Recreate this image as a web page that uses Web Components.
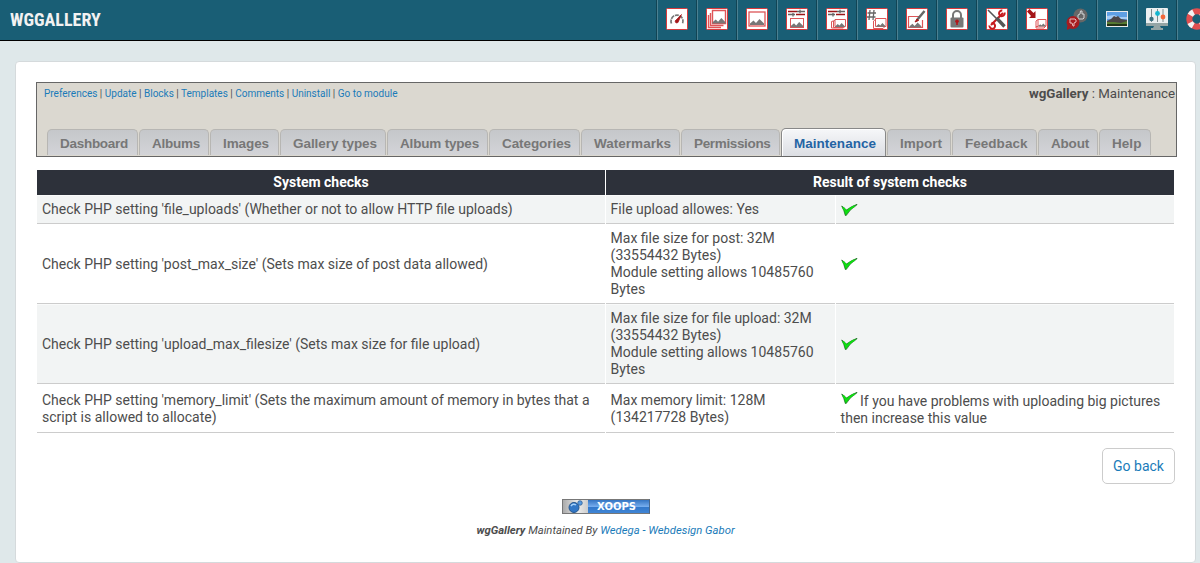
<!DOCTYPE html>
<html lang="en">
<head>
<meta charset="utf-8">
<title>wgGallery : Maintenance</title>
<style>
html,body{margin:0;height:563px;overflow:hidden;background:#dfe8ea}
body{font-family:Roboto,"Liberation Sans",sans-serif;font-size:14px;line-height:17px;color:#4d4d4d}
</style>
</head>
<body>
<wg-page></wg-page>
<script>
const define = (name, html, after) => {
  const t = document.createElement('template');
  t.innerHTML = html;
  customElements.define(name, class extends HTMLElement {
    connectedCallback() {
      if (this.shadowRoot) return;
      this.attachShadow({mode: 'open'}).append(t.content.cloneNode(true));
      if (after) after(this, this.shadowRoot);
    }
  });
};

const tile = s => `<rect x=".5" y=".5" width="21" height="21" rx="1" fill="#fff" stroke="#d93a3c"/>${s}`;
const hills = (x, y, k) => `<path transform="translate(${x} ${y}) scale(${k})" d="M0 6V4.500L3.500 1.500 6 4 9.500 0 14 4.500V6Z" fill="#777"/>`;
const sliders = '<path d="M2 3.500H11M10 6.500H19" stroke="#9c1517" stroke-width="1.500"/><path d="M11 3.500H19M2 6.500H9M7 5V8.500M14 1.800V5.200" stroke="#666" stroke-width="1.300"/>';
const stack = '<path d="M9 11.500H19.500V18.500H9ZM9 12.500 5.500 13.500V20H17L19 18.500M7.500 13V19.500H17" fill="none" stroke="#dc5759"/>';
const icons = {
  gauge: tile('<path d="M5.500 15.500A6 6 0 1 1 16.500 15.500" fill="none" stroke="#777" stroke-width="1.700" stroke-dasharray="4 .8"/><path d="M9 13 15.500 6.500 12 14.500 10 15Z" fill="#a51618" stroke="#a51618" stroke-width=".7"/>'),
  albums: tile('<path d="M6.500 2.500H19.500V15.500H6.500ZM4.500 5V17.500H17.500M2.500 7V19.500H15" fill="none" stroke="#df5557" stroke-width="1.400"/>' + hills(6.5, 10, .93)),
  image: tile('<rect x="3" y="4" width="16" height="14" fill="#fff" stroke="#dc5557" stroke-width="1.300"/>' + hills(4, 11, 1)),
  gtypes: tile(sliders + '<rect x="4.500" y="10.500" width="13" height="9" fill="none" stroke="#dc5557"/>' + hills(5, 14, .86)),
  atypes: tile(sliders + stack + hills(9.5, 15, .65)),
  cats: tile('<path d="M4 2 3 12M8 2 7 12M1.500 5H10M1 9H9.500" stroke="#666" stroke-width="1.300"/><path d="M9.500 10.500H20V18.500H9.500ZM9.500 11.500 7.500 13V20.500H17L19 18.500" fill="none" stroke="#df5557"/>' + hills(10.5, 15, .62)),
  water: tile('<path d="M14.500 8.500H2.500V19.500H16.500V12" fill="none" stroke="#dc5557" stroke-width="1.200"/>' + hills(3.5, 14.5, .85) + '<path d="M11 12 18.500 3" stroke="#666" stroke-width="2.500"/><path d="M9 14 11 11 12.500 12.500Z" fill="#a51618" stroke="#a51618"/>'),
  lock: tile('<path d="M7 10V7A4 4 0 0 1 15 7V10" fill="none" stroke="#777" stroke-width="2"/><rect x="4.500" y="9.500" width="13" height="10" rx="1" fill="#777"/><circle cx="11" cy="13.200" r="1.800" fill="#b41518"/><path d="M11 13V17" stroke="#b41518" stroke-width="1.600"/>'),
  tools: tile('<path d="M5 17 17 5" stroke="#c61a1e" stroke-width="2.200"/><path d="M18.500 4.500A2.800 2.800 0 1 1 16.300 2.600M3.500 17.500A2.800 2.800 0 1 0 5.600 15.200" fill="none" stroke="#c61a1e" stroke-width="2"/><path d="M2 2 11 11" stroke="#555" stroke-width="1.600"/><path d="M10.500 10 18.500 18.500" stroke="#555" stroke-width="3.400"/>'),
  imp: tile('<path d="M1 3.500 3.500 1 7.500 5 9.500 3V10H3L5 8Z" fill="#a51618"/><path d="M12 11.500H20V18H12ZM12 11.500 10 13V20H18L20 18M10 18.500H12" fill="none" stroke="#df5557"/>' + hills(12.5, 15.5, .5)),
  feedback: '<circle cx="14.500" cy="7.500" r="7" fill="#666"/><path d="M12 11V7L14 6 14.500 3H16V6H18V10L17 11Z" fill="none" stroke="#d4d7d8"/><circle cx="7" cy="14.500" r="6.500" fill="#a61c20"/><path d="M4 11H9L10 12V14L8 15V18H7L6 15H4Z" fill="none" stroke="#e6bcbd"/><path d="M1 18V22L5 20" fill="#a61c20"/>',
  photo: '<rect x=".5" y="3.500" width="21" height="15" fill="#5e9fe3" stroke="#eaeaea"/><path d="M1 8 8 7 13 9H21V11H1Z" fill="#a4ccf4"/><path d="M1 13 5 11 8 8 10 9 12 8 15 11 21 12V18H1Z" fill="#4b4647"/><path d="M1 14 8 14 15 15 21 13V18H1Z" fill="#577b31"/><path d="M1 17H21" stroke="#253318" stroke-width="2"/>',
  monitor: '<rect y="0" width="22" height="18" rx="1" fill="#ecf0f1"/><path d="M0 15H22V18H0Z" fill="#95a5a5"/><path d="M8 18H14L15 20H17V22H5V20H7Z" fill="#95a5a5"/><path d="M5.500 1V14M11.500 1V14M17 1V14" stroke="#7f8c8d"/><circle cx="5.500" cy="11" r="2.200" fill="#3c7080"/><circle cx="11.500" cy="5.500" r="2.400" fill="#13b5cf"/><circle cx="17" cy="9" r="2.400" fill="#f4673a"/>',
  buoy: '<circle cx="11" cy="11" r="7.700" fill="none" stroke="#e04f50" stroke-width="6"/><circle cx="11" cy="11" r="7.700" fill="none" stroke="#f3f3f3" stroke-width="6" stroke-dasharray="4.500 7.595" stroke-dashoffset="-3.800"/>'
};

define('wg-icon', `<style>:host{display:block;width:22px;height:22px}svg{display:block}</style><svg width="22" height="22" viewBox="0 0 22 22"></svg>`,
  (el, r) => { r.querySelector('svg').innerHTML = icons[el.getAttribute('name')]; });

define('wg-toolbar', `<style>
:host{display:flex;box-sizing:border-box;height:41px;background:#195e75;border-bottom:1px solid #000;justify-content:space-between;overflow:hidden}
h1{margin:0 0 0 10px;font:700 18px/39px "Roboto Condensed",Roboto,sans-serif;color:#f2f2f2;white-space:nowrap}
nav{display:flex;width:544px;overflow:hidden}
a{flex:none;box-sizing:border-box;width:40px;height:40px;padding:8px 0 0 9px;border-left:1px solid #114454;box-shadow:inset 1px 0 #4b8192}
</style><h1>WGGALLERY</h1><nav></nav>`,
  (el, r) => { r.querySelector('nav').innerHTML = Object.keys(icons).map(n => `<a><wg-icon name="${n}"></wg-icon></a>`).join(''); });

define('wg-tab', `<style>
:host{display:block;box-sizing:border-box;flex:none;height:26px;border:1px solid #b7b6b3;border-bottom:0;border-radius:5px 5px 0 0;background:linear-gradient(#c5c7ca,#d3d4d8);font:700 13.5px/27px "Liberation Sans",Arial,sans-serif;color:#777;padding-left:12px;white-space:nowrap;margin-bottom:1px}
:host([active]){height:28px;margin-bottom:0;line-height:29px;border-color:#888;background:linear-gradient(#f6f7f9,#dcdee3);color:#2464a4;box-shadow:inset 1px 1px #fff}
</style><span><slot></slot></span>`,
  (el, r) => {
    el.style.width = el.getAttribute('width') + 'px';
    const s = r.querySelector('span');
    s.style.letterSpacing = (el.getAttribute('text-width') - s.getBoundingClientRect().width) / el.textContent.length + 'px';
  });

define('wg-nav', `<style>
:host{display:flex;flex-direction:column;justify-content:space-between;box-sizing:border-box;height:75px;border:1px solid #666;background:#dbd8d0}
.top{display:flex;justify-content:space-between;padding:2px 1px 0 7px}
.links{font-size:10px;line-height:18px;white-space:nowrap}
.links a{color:#1a7bb9}
.path{font-size:13.3px}
.tabs{display:flex;align-items:flex-end;gap:1px;padding-left:10px}
</style>
<div class="top"><div class="links"><a>Preferences</a> | <a>Update</a> | <a>Blocks</a> | <a>Templates</a> | <a>Comments</a> | <a>Uninstall</a> | <a>Go to module</a></div><div class="path"><b>wgGallery</b> : Maintenance</div></div>
<div class="tabs"></div>`,
  (el, r) => {
    r.querySelector('.tabs').innerHTML = [['Dashboard',91,68],['Albums',70,48],['Images',69,46],['Gallery types',106,84],['Album types',101,79],['Categories',91,69],['Watermarks',99,77],['Permissions',99,76.500],['Maintenance',105,82,1],['Import',64,42],['Feedback',85,62.500],['About',60,38],['Help',52,29.500]]
      .map(([t, w, tw, on]) => `<wg-tab width="${w}" text-width="${tw}"${on ? ' active' : ''}>${t}</wg-tab>`).join('');
  });

define('wg-check', `<style>:host{display:inline-block;width:17px;height:16px;vertical-align:-2px}svg{display:block}</style>
<svg width="17" height="16" viewBox="0 0 17 16"><path d="M.7 4 4 6.500 5.500 8Q10 4.500 16 2.300L15.800 3Q9 7 5.200 13.500H4.300Q3 8 .7 4Z" fill="#0cd012" stroke="#176a1b" stroke-width=".7"/><path d="M2 5.500 4.300 8.200 5.200 10.500Q9 6 13.500 4" fill="none" stroke="#0ee010" stroke-width="1.800"/></svg>`);

define('wg-checks', `<style>
:host{display:grid;grid-template-columns:568px 229px 338px;grid-template-rows:25px 29px 80px 80px 49px;column-gap:1px}
div{box-sizing:border-box;display:flex;align-items:center;padding:1px 4.600px 0;border-bottom:1px solid #ccc;white-space:nowrap}
div:nth-of-type(3n){padding-left:5px}
.h{background:#2d313a;color:#fff;font-weight:700;justify-content:center;border:0;padding:0}
.wide{grid-column:span 2}
.o{background:#f2f4f4;border-top:1px solid #f9fafa;padding-top:0}
p{margin:0}
.n p{height:31px}
.n wg-check{height:16px;vertical-align:0;margin-top:-4px;margin-right:-1px}
</style>
<div class="h">System checks</div><div class="h wide">Result of system checks</div>
<div class="o">Check PHP setting 'file_uploads' (Whether or not to allow HTTP file uploads)</div><div class="o">File upload allowes: Yes</div><div class="o"><wg-check></wg-check></div>
<div>Check PHP setting 'post_max_size' (Sets max size of post data allowed)</div><div><p>Max file size for post: 32M<br>(33554432 Bytes)<br>Module setting allows 10485760<br>Bytes</p></div><div><wg-check></wg-check></div>
<div class="o">Check PHP setting 'upload_max_filesize' (Sets max size for file upload)</div><div class="o"><p>Max file size for file upload: 32M<br>(33554432 Bytes)<br>Module setting allows 10485760<br>Bytes</p></div><div class="o"><wg-check></wg-check></div>
<div><p>Check PHP setting 'memory_limit' (Sets the maximum amount of memory in bytes that a<br>script is allowed to allocate)</p></div><div><p>Max memory limit: 128M<br>(134217728 Bytes)</p></div><div class="n"><p><wg-check></wg-check> If you have problems with uploading big pictures<br>then increase this value</p></div>`);

define('wg-badge', `<style>
:host{display:flex;box-sizing:border-box;width:88px;height:15px;border:1px solid #777;border-right-color:#49678b}
i{width:25px;background:linear-gradient(90deg,#aaa,#ececec 60%,#ccc);display:flex;justify-content:center}
b{flex:1;background:linear-gradient(#3474c2,#75aced 50%,#3278cb 55%,#4085d5);color:#fff;font:700 10px/13px "DejaVu Sans",sans-serif;text-align:center;padding-right:3px}
</style><i><svg width="15" height="13" viewBox="0 0 15 13"><circle cx="6" cy="7.500" r="5" fill="#3277c6" stroke="#25568e"/><circle cx="12" cy="3" r="2.300" fill="#589ae0" stroke="#25568e" stroke-width=".7"/><path d="M3 6Q5 3 8 5" stroke="#a9d3fa" fill="none" stroke-width="1.500"/></svg></i><b>XOOPS</b>`);

define('wg-page', `<style>
:host{display:block}
main{display:flex;flex-direction:column;box-sizing:border-box;width:1181px;height:502px;margin:20px 0 0 15px;padding:20px;background:#fff;border:1px solid #d5dadc;border-radius:4px}
wg-nav{width:1141px}
wg-checks{margin:13px 0 0 1px}
.back{align-self:flex-end;box-sizing:border-box;width:73px;height:36px;margin:15px 0 0 0;border:1px solid #ccc;border-radius:5px;color:#1a7bb9;text-align:center;line-height:35px}
footer{display:flex;flex-direction:column;align-items:center;margin-top:15px;gap:8px;font-size:11.300px;font-style:italic}
footer a{color:#1a7bb9}
</style>
<wg-toolbar></wg-toolbar>
<main><wg-nav></wg-nav><wg-checks></wg-checks><a class="back">Go back</a>
<footer><wg-badge></wg-badge><span><b>wgGallery</b> Maintained By <a>Wedega - Webdesign Gabor</a></span></footer></main>`);
</script>
</body>
</html>
